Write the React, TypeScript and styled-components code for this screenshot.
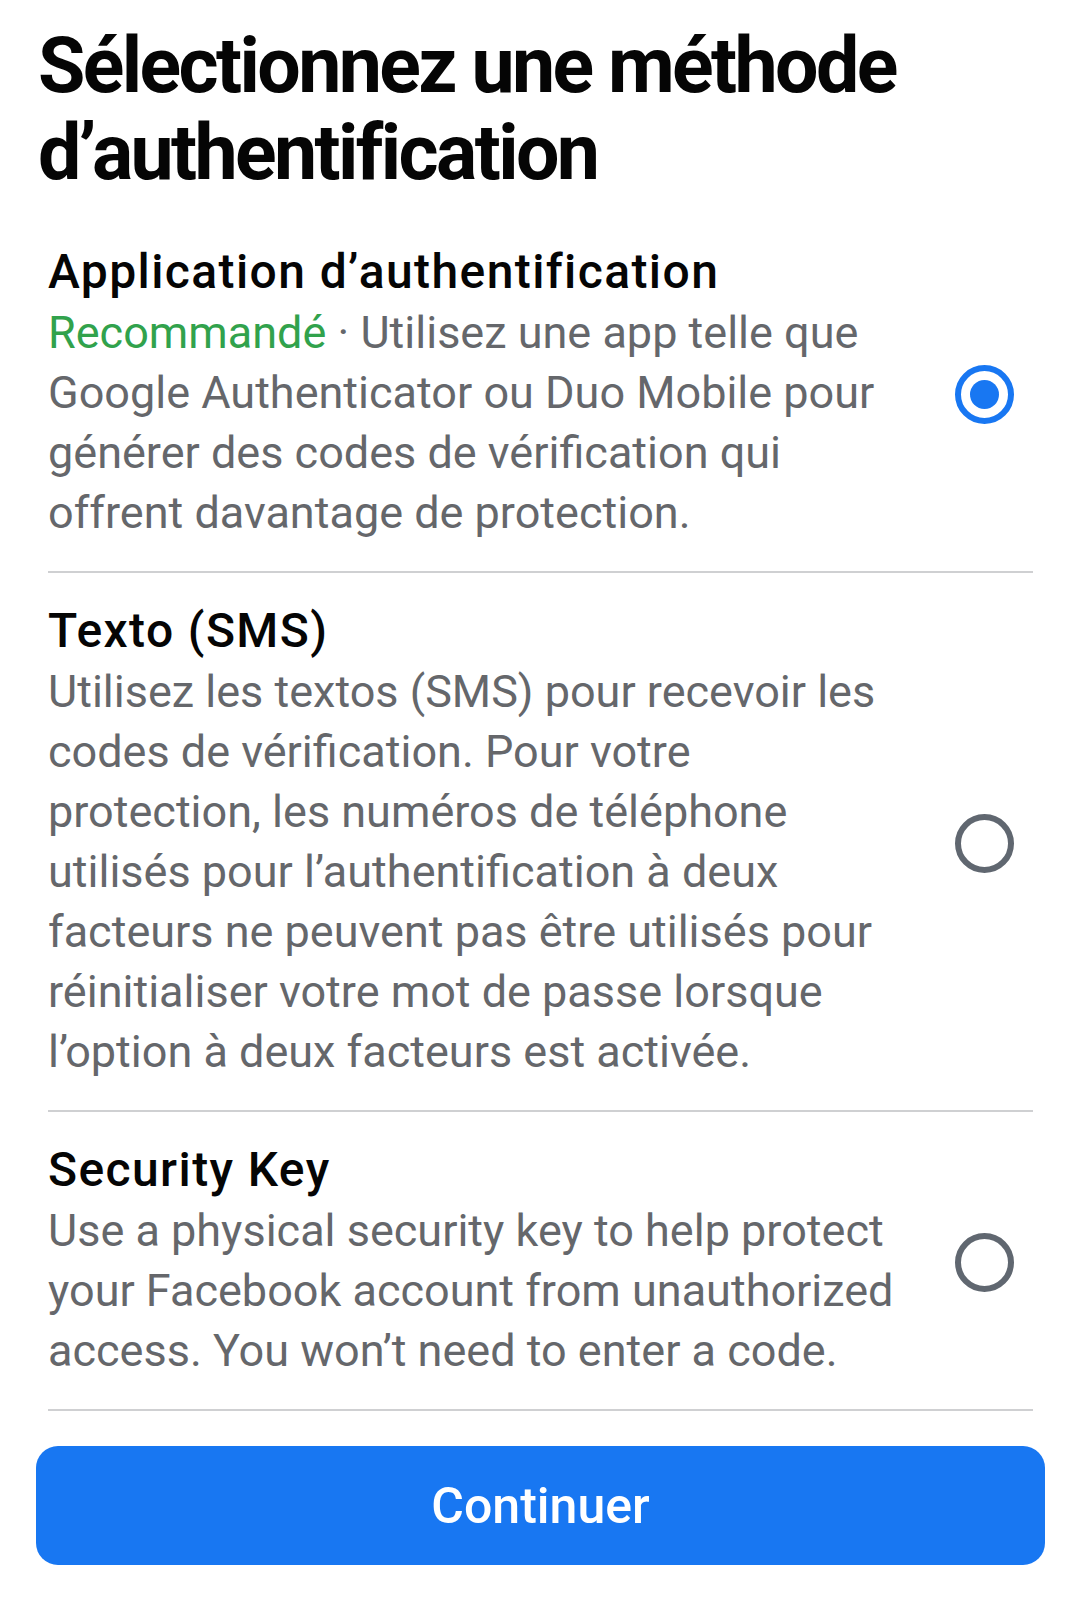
import React, { useState } from "react";
import styled, { createGlobalStyle } from "styled-components";

const GlobalStyle = createGlobalStyle`
  html, body {
    margin: 0;
    padding: 0;
    background: #ffffff;
  }
  body {
    font-family: Roboto, "Noto Sans", "Liberation Sans", sans-serif;
    -webkit-font-smoothing: antialiased;
  }
`;

interface MethodType {
  id: string;
  title: string;
  recommended?: boolean;
  description: string;
}

const methods: MethodType[] = [
  {
    id: "app",
    title: "Application d’authentification",
    recommended: true,
    description:
      "Utilisez une app telle que Google Authenticator ou Duo Mobile pour générer des codes de vérification qui offrent davantage de protection.",
  },
  {
    id: "sms",
    title: "Texto (SMS)",
    description:
      "Utilisez les textos (SMS) pour recevoir les codes de vérification. Pour votre protection, les numéros de téléphone utilisés pour l’authentification à deux facteurs ne peuvent pas être utilisés pour réinitialiser votre mot de passe lorsque l’option à deux facteurs est activée.",
  },
  {
    id: "key",
    title: "Security Key",
    description:
      "Use a physical security key to help protect your Facebook account from unauthorized access. You won’t need to enter a code.",
  },
];

function App() {
  const [selected, setSelected] = useState("app");

  return (
    <>
      <GlobalStyle />
      <Page>
        <Heading>Sélectionnez une méthode d’authentification</Heading>
        <List>
          {methods.map((m) => (
            <Row key={m.id} onClick={() => setSelected(m.id)}>
              <Text>
                <Title>{m.title}</Title>
                <Description>
                  {m.recommended && (
                    <>
                      <Recommended>Recommandé</Recommended> ·{" "}
                    </>
                  )}
                  {m.description}
                </Description>
              </Text>
              <Radio $checked={selected === m.id} />
            </Row>
          ))}
        </List>
        <ContinueButton>Continuer</ContinueButton>
      </Page>
    </>
  );
}

export default App;

const Page = styled.div`
  box-sizing: border-box;
  width: 1080px;
  min-height: 1601px;
  padding: 23px 35px 0 36px;
`;

const Heading = styled.h1`
  margin: 0 0 17px 2px;
  font-size: 77px;
  line-height: 87px;
  font-weight: 700;
  letter-spacing: -2.6px;
  color: #050505;
  max-width: 960px;
`;

const List = styled.div`
  display: flex;
  flex-direction: column;
  padding: 0 12px;
`;

const Row = styled.div`
  display: flex;
  align-items: center;
  justify-content: space-between;
  padding: 27px 0 28px;
  border-bottom: 2px solid #cfd0d2;
  cursor: pointer;
`;

const Text = styled.div`
  width: 858px;
`;

const Title = styled.div`
  font-size: 48px;
  line-height: 62px;
  font-weight: 500;
  letter-spacing: 1.4px;
  color: #050505;
`;

const Description = styled.div`
  font-size: 45px;
  line-height: 60px;
  font-weight: 400;
  color: #65676b;
`;

const Recommended = styled.span`
  color: #31a24c;
`;

const Radio = styled.span<{ $checked: boolean }>`
  flex: 0 0 auto;
  box-sizing: border-box;
  width: 59px;
  height: 59px;
  margin-right: 19px;
  margin-top: 4px;
  border-radius: 50%;
  border: 6px solid ${({ $checked }) => ($checked ? "#1877f2" : "#606770")};
  display: flex;
  align-items: center;
  justify-content: center;

  &::after {
    content: "";
    width: 29px;
    height: 29px;
    border-radius: 50%;
    background: #1877f2;
    display: ${({ $checked }) => ($checked ? "block" : "none")};
  }
`;

const ContinueButton = styled.button`
  display: block;
  width: 100%;
  height: 119px;
  margin-top: 35px;
  border: none;
  border-radius: 22px;
  background: #1877f2;
  color: #ffffff;
  font-family: Roboto, "Noto Sans", "Liberation Sans", sans-serif;
  font-size: 50px;
  font-weight: 500;
  cursor: pointer;
`;
